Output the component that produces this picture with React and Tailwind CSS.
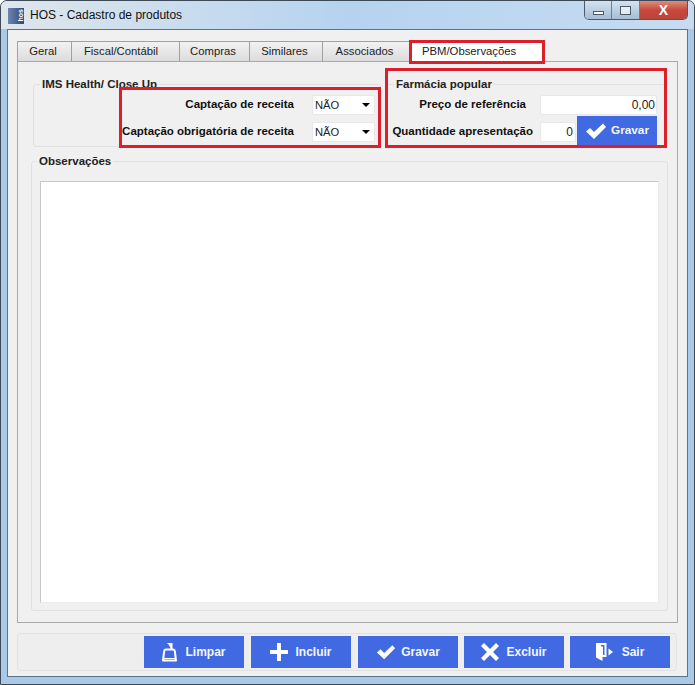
const font = { fontFamily: '"Liberation Sans", sans-serif' }

const tabs = [
    { label: 'Geral', w: 'w-[55px] pr-[3px]' },
    { label: 'Fiscal/Contábil', w: 'w-[109px] pr-[9px]' },
    { label: 'Compras', w: 'w-[71px] pr-[3px]' },
    { label: 'Similares', w: 'w-[74px] pr-[3px]' },
    { label: 'Associados', w: 'w-[88px] pr-[3px]' },
]

const IconCheck = ({ size = 22 }) => (
    <svg width={size} height={size} viewBox="0 0 22 22" fill="white">
        <path d="M1 11.5 L5 8 L9 12 L18 3.5 L21 7 L9 19 Z" />
    </svg>
)

const IconBroom = () => (
    <svg width="15" height="19" viewBox="0 0 15 19" fill="none" stroke="white" strokeWidth="2">
        <path d="M5.5 0 H9.5 V6" fill="white" />
        <path d="M4 6.5 H11 Q12.5 6.5 12.8 8 L14 17.5 H1 L2.2 8 Q2.5 6.5 4 6.5 Z" strokeLinejoin="round" />
        <path d="M2 15.5 H13" strokeWidth="1" />
    </svg>
)

const IconPlus = () => (
    <svg width="18" height="18" viewBox="0 0 18 18" fill="white">
        <path d="M7 0 H11 V7 H18 V11 H11 V18 H7 V11 H0 V7 H7 Z" />
    </svg>
)

const IconX = () => (
    <svg width="18" height="18" viewBox="0 0 18 18" fill="white">
        <path d="M0 3 L3 0 L9 6 L15 0 L18 3 L12 9 L18 15 L15 18 L9 12 L3 18 L0 15 L6 9 Z" />
    </svg>
)

const IconDoor = () => (
    <svg width="17" height="18" viewBox="0 0 17 18" fill="white">
        <path fillRule="evenodd" d="M0 0 H10.5 V14 H6.5 V18 L0 14.5 Z M5 2 H8.5 V12 H7 V3.5 H5 Z" />
        <path d="M12.5 5.5 L17 9 L12.5 12.5 Z" />
    </svg>
)

const BottomButton = ({ icon, label, gap = 'gap-[7px]' }) => (
    <button className={`w-[100px] h-8 bg-[#4169e1] flex items-center justify-center ${gap} text-[#f4f6fe] text-[12px] font-bold`}>
        {icon}
        <span>{label}</span>
    </button>
)

const Field = ({ value, className }) => (
    <div className={`h-5 bg-white border border-[#e8e8e8] rounded-[2px] flex items-center text-[12px] font-normal text-[#222] ${className}`}>
        {value}
    </div>
)

const Combo = () => (
    <div className="w-[63px] h-5 bg-white border border-[#e8e8e8] rounded-[2px] flex items-center justify-between pl-[2px] pr-[4px] text-[11.2px] font-normal text-[#222]">
        <span>NÃO</span>
        <span className="w-0 h-0 border-x-[4px] border-x-transparent border-t-[4px] border-t-black" />
    </div>
)

const App = () => {
    return (
        <div style={font} className="relative w-[695px] h-[685px] overflow-hidden rounded-t-[7px] border border-[#3d4a55] bg-[#a9c9e8]">
            {/* barra de titulo */}
            <div className="h-7 flex items-center pl-[7px] pr-[6px] bg-gradient-to-r from-[#dfe6ec] via-[#b5d3ef] to-[#c6dcf1]">
                <div className="w-4 h-4 mr-[6px] mt-[1px] bg-gradient-to-r from-[#6d86ad] to-[#2f4a7c] flex items-center justify-end overflow-hidden">
                    <span className="[writing-mode:vertical-rl] rotate-180 text-[7px] leading-[7px] font-bold text-white">hos</span>
                </div>
                <span className="text-[12px] text-[#111]">HOS - Cadastro de produtos</span>
                <div className="ml-auto flex h-[19px] self-start border border-[#4d5a68] border-t-0 rounded-b-[5px] overflow-hidden">
                    <div className="w-[27px] bg-gradient-to-b from-[#d4e2f0] to-[#a6bdd5] border-r border-[#6d7f92] flex items-end justify-center pb-[4px]">
                        <div className="w-[11px] h-[4px] bg-white border border-[#4d5a68]" />
                    </div>
                    <div className="w-[28px] bg-gradient-to-b from-[#d4e2f0] to-[#a6bdd5] border-r border-[#6d7f92] flex items-center justify-center">
                        <div className="w-[11px] h-[9px] bg-white/60 border border-[#4d5a68]" />
                    </div>
                    <div className="w-[47px] bg-gradient-to-b from-[#dc8d80] via-[#c8493a] to-[#b9443a] flex items-center justify-center text-white text-[14px] font-bold">X</div>
                </div>
            </div>

            {/* area interna */}
            <div className="ml-[6px] mr-[6px] h-[648px] bg-[#f0f0f0] border border-[#5f7384] px-[9px] pt-[11px]">
                {/* abas */}
                <div className="flex h-[20px] items-end text-[11.3px] text-[#222]">
                    {tabs.map((t) => (
                        <div key={t.label} className={`${t.w} h-[20px] flex items-center justify-center bg-gradient-to-b from-[#f2f2f2] to-[#dcdcdc] border border-[#a0a0a0] border-b-0 -mr-px`}>
                            {t.label}
                        </div>
                    ))}
                    <div className="relative ml-px w-[133px] h-[22px] -mb-px flex items-center pl-[12px] bg-white">
                        PBM/Observações
                    </div>
                </div>

                {/* pagina da aba */}
                <div className="w-[661px] h-[562px] border border-[#a9a9a9] bg-[#f0f0f0] pl-[13px] pr-[9px] pt-[16px]">
                    <div className="flex gap-[4px] h-[76px]">
                        <fieldset className="w-[348px] h-[69px] ml-[2px] border border-[#e0e0e0] rounded-[3px]">
                            <legend className="ml-[6px] px-[2px] text-[11.5px] font-bold text-[#222] leading-[12px]">IMS Health/ Close Up</legend>
                            <div className="flex flex-col items-end gap-[7px] pr-[5px] pt-[5px] text-[11.5px] font-bold text-[#111]">
                                <div className="flex items-center gap-[18px]">
                                    <span>Captação de receita</span>
                                    <Combo />
                                </div>
                                <div className="flex items-center gap-[18px]">
                                    <span>Captação obrigatória de receita</span>
                                    <Combo />
                                </div>
                            </div>
                        </fieldset>
                        <fieldset className="flex-1 border-t border-[#e0e0e0] pr-[11px]">
                            <legend className="ml-[9px] px-[2px] text-[11.5px] font-bold text-[#222] leading-[12px]">Farmácia popular</legend>
                            <div className="flex flex-col text-[11.5px] font-bold text-[#111] pt-[5px]">
                                <div className="flex items-center justify-end h-5">
                                    <span className="mr-[14px]">Preço de referência</span>
                                    <Field value="0,00" className="w-[117px] justify-end pr-[1px]" />
                                </div>
                                <div className="flex items-center justify-end mt-[7px] h-5">
                                    <span className="mr-[7px]">Quantidade apresentação</span>
                                    <Field value="0" className="w-[36px] justify-end pr-[2px]" />
                                    <button className="ml-px w-[80px] h-[29px] self-start -mt-[6px] bg-[#4169e1] flex items-center justify-center gap-[4px] text-[#f4f6fe] text-[11.8px] font-bold">
                                        <IconCheck />
                                        <span>Gravar</span>
                                    </button>
                                </div>
                            </div>
                        </fieldset>
                    </div>

                    <fieldset className="w-[637px] h-[456px] mt-[1px] border border-[#e0e0e0] rounded-[3px] px-[8px]">
                        <legend className="-ml-[3px] px-[2px] text-[11.5px] font-bold text-[#222] leading-[12px]">Observações</legend>
                        <div className="w-full h-[422px] mt-[14px] bg-white border border-[#c8c8c8] border-b-[#ececec] border-r-[#ececec]" />
                    </fieldset>
                </div>

                {/* botoes */}
                <div className="w-[660px] h-[38px] mt-[10px] border border-[#e2e2e2] rounded-[3px] flex items-center justify-end pr-[6px] bg-[#eeeeee]">
                    <BottomButton icon={<IconBroom />} label="Limpar" gap="gap-[8px]" />
                    <div className="flex gap-[7px] ml-[7px]">
                        <BottomButton icon={<IconPlus />} label="Incluir" />
                        <BottomButton icon={<IconCheck size={20} />} label="Gravar" gap="gap-[5px]" />
                    </div>
                    <div className="flex gap-[6px] ml-[6px]">
                        <BottomButton icon={<IconX />} label="Excluir" />
                        <BottomButton icon={<IconDoor />} label="Sair" gap="gap-[9px]" />
                    </div>
                </div>
            </div>

            {/* marcacoes em vermelho */}
            <div className="absolute left-[118px] top-[86px] w-[262px] h-[61px] border-[3px] border-[#dc1f2b]" />
            <div className="absolute left-[384px] top-[67px] w-[282px] h-[80px] border-[3px] border-[#dc1f2b]" />
            <div className="absolute left-[408px] top-[39px] w-[136px] h-[24px] border-[3px] border-[#dc1f2b]" />
        </div>
    )
}

export default App
